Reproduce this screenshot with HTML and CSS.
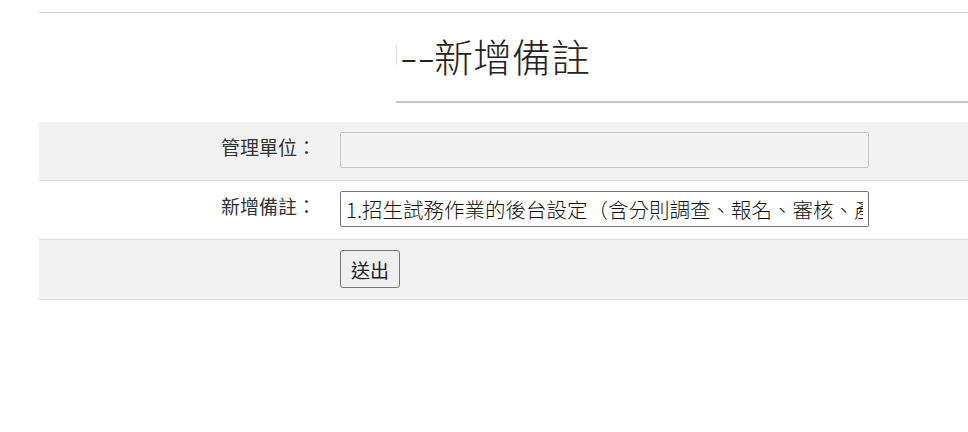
FILE: index.html
```html
<!DOCTYPE html>
<html lang="zh-Hant">
<head>
<meta charset="utf-8">
<title>新增備註</title>
<link rel="stylesheet" href="styles.css">
</head>
<body>
<div class="page">
  <div class="header">
    <h1 class="title"><span class="mark"></span><span class="dash">--</span>新增備註</h1>
  </div>
  <form class="form">
    <div class="row shade">
      <label class="label">管理單位：</label>
      <div class="field"><input class="input" type="text" disabled></div>
    </div>
    <div class="row">
      <label class="label">新增備註：</label>
      <div class="field"><input class="input active" type="text" value="1.招生試務作業的後台設定（含分則調查、報名、審核、產生准考證等）"></div>
    </div>
    <div class="row shade">
      <div class="label"></div>
      <div class="field"><button class="btn" type="button">送出</button></div>
    </div>
  </form>
</div>
</body>
</html>
```
FILE: styles.css
```css
html, body {
  margin: 0;
  padding: 0;
  background: #fff;
  overflow: hidden;
}
body {
  font-family: "Noto Sans CJK TC", "Noto Sans", sans-serif;
  color: #333;
}
.page {
  margin-left: 39px;
  padding-top: 12px;
}
.header {
  border-top: 1px solid #d0d0d0;
  padding-left: 357px;
}
.title {
  margin: 0;
  height: 90px;
  box-sizing: border-box;
  padding-top: 18px;
  border-bottom: 2px solid #c8c8c8;
  font-size: 39px;
  font-weight: 300;
  line-height: 48px;
  color: #222;
  white-space: nowrap;
}
.mark {
  display: inline-block;
  vertical-align: top;
  width: 1px;
  height: 20px;
  margin-top: 14px;
  margin-right: 3px;
  background: #d4e2e8;
}
.dash {
  display: inline-block;
  transform: scaleX(1.35);
  transform-origin: left center;
  margin-right: 8px;
}
.form {
  margin-top: 19px;
}
.row {
  display: grid;
  grid-template-columns: 291px 1fr;
  padding: 10px 0 11px;
  border-bottom: 1px solid #dedede;
  min-height: 37px;
}
.shade {
  background: #f2f2f2;
}
.label {
  text-align: right;
  padding-right: 14px;
  font-size: 19px;
  line-height: 30px;
  color: #333;
}
.field {
  padding-left: 10px;
}
.input {
  box-sizing: border-box;
  width: 529px;
  height: 36px;
  padding: 0 5px;
  margin: 0;
  font-family: "Noto Sans CJK TC", "Noto Sans", sans-serif;
  font-size: 20.5px;
  font-weight: 300;
  color: #111;
  border: 1px solid #c6c6c6;
  border-radius: 2px;
  background: #f2f2f2;
}
.input.active {
  border: 1px solid #767676;
  border-radius: 2px;
  background: #fff;
}
.btn {
  box-sizing: border-box;
  width: 60px;
  height: 38px;
  margin: 0;
  padding: 0;
  font-family: "Noto Sans CJK TC", "Noto Sans", sans-serif;
  font-size: 19px;
  color: #222;
  background: #efefef;
  border: 1px solid #767676;
  border-radius: 3px;
}
```
